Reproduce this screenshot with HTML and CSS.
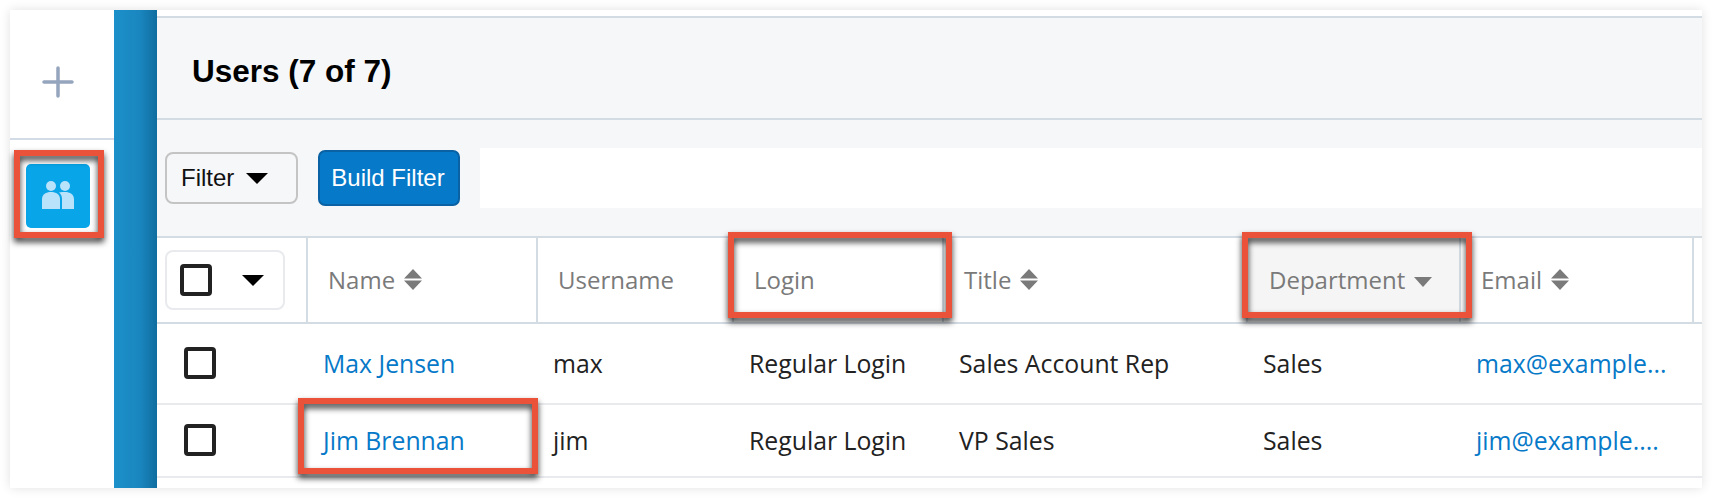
FILE: index.html
```html
<!DOCTYPE html>
<html lang="en">
<head>
<meta charset="utf-8">
<title>Users</title>
<link rel="stylesheet" href="styles.css">
</head>
<body>
<div class="window">
  <aside class="rail">
    <div class="rail-top">
      <svg class="plus" viewBox="0 0 32 32" width="32" height="32"><path d="M16 2v28M2 16h28" stroke="#95a5bd" stroke-width="3.500" stroke-linecap="round" fill="none"/></svg>
    </div>
    <div class="rail-item">
      <div class="tile">
        <svg viewBox="0 0 64 64" width="64" height="64"><circle cx="25" cy="22" r="5" fill="#b9e2fb"/><circle cx="39" cy="22" r="5" fill="#b9e2fb"/><path d="M16 45V35c0-4.500 4-7 9-7s9 2.500 9 7v10z" fill="#b9e2fb"/><path d="M36 45V35c0-3-1-5-3-6.500 2-.5 4-.5 6-.5 5 0 9 2.500 9 7v10z" fill="#b9e2fb"/></svg>
      </div>
    </div>
  </aside>
  <div class="strip"></div>
  <main class="main">
    <header class="title-bar"><h1>Users (7 of 7)</h1></header>
    <div class="filter-bar">
      <button class="btn-filter">Filter<span class="caret"></span></button>
      <button class="btn-build">Build Filter</button>
      <div class="search"></div>
    </div>
    <div class="table">
      <div class="row head">
        <div class="cell sel"><div class="pill"><span class="check"></span><span class="caret small"></span></div></div>
        <div class="cell th">Name<svg class="sort" viewBox="0 0 18 21" width="18" height="21"><path d="M9 0l9 9.500H0zM9 21L0 11.500h18z" fill="#7a7a7a"/></svg></div>
        <div class="cell th">Username</div>
        <div class="cell th">Login</div>
        <div class="cell th">Title<svg class="sort" viewBox="0 0 18 21" width="18" height="21"><path d="M9 0l9 9.500H0zM9 21L0 11.500h18z" fill="#7a7a7a"/></svg></div>
        <div class="cell th active">Department<svg class="sort down" viewBox="0 0 18 10" width="18" height="10"><path d="M9 10L0 0h18z" fill="#7a7a7a"/></svg></div>
        <div class="cell th">Email<svg class="sort" viewBox="0 0 18 21" width="18" height="21"><path d="M9 0l9 9.500H0zM9 21L0 11.500h18z" fill="#7a7a7a"/></svg></div>
        <div class="cell th end"></div>
      </div>
      <div class="row body first">
        <div class="cell sel"><span class="check row-check"></span></div>
        <div class="cell"><a>Max Jensen</a></div>
        <div class="cell">max</div>
        <div class="cell">Regular Login</div>
        <div class="cell">Sales Account Rep</div>
        <div class="cell">Sales</div>
        <div class="cell"><a>max@example...</a></div>
        <div class="cell"></div>
      </div>
      <div class="row body second">
        <div class="cell sel"><span class="check row-check"></span></div>
        <div class="cell"><a>Jim Brennan</a></div>
        <div class="cell">jim</div>
        <div class="cell">Regular Login</div>
        <div class="cell">VP Sales</div>
        <div class="cell">Sales</div>
        <div class="cell"><a>jim@example....</a></div>
        <div class="cell"></div>
      </div>
    </div>
  </main>
  <div class="mark mark-rail"></div>
  <div class="mark mark-jim"></div>
  <div class="mark mark-login"></div>
  <div class="mark mark-dept"></div>
</div>
</body>
</html>
```
FILE: styles.css
```css
* { box-sizing: border-box; }
html, body { margin: 0; padding: 0; background: #fff; }
body { padding: 10px; height: 498px; overflow: hidden; }
.window {
  position: relative;
  display: flex;
  width: 1692px;
  height: 478px;
  background: #fff;
  box-shadow: 0 0 10px rgba(0, 0, 0, .12);
  overflow: visible;
}
.rail { width: 104px; flex: none; background: #fff; }
.rail-top {
  height: 130px;
  border-bottom: 2px solid #d3dbe6;
  display: flex;
  align-items: center;
  justify-content: center;
  padding: 16px 8px 0 0;
}
.rail-item { padding: 24px 14px 0 16px; }
.tile {
  width: 64px;
  height: 64px;
  border-radius: 5px;
  background: #08a5e8;
}
.tile svg { display: block; }
.strip {
  width: 43px;
  flex: none;
  background: linear-gradient(90deg, #1c90ca 0%, #1a86bf 60%, #0f6d9f 100%);
}
.main {
  flex: 1;
  min-width: 0;
  padding-top: 6px;
  background: #fff;
  display: flex;
  flex-direction: column;
}
.title-bar {
  height: 104px;
  flex: none;
  background: #f6f7f9;
  border-top: 2px solid #d3dbe3;
  border-bottom: 2px solid #d3dbe3;
  display: flex;
  align-items: center;
  padding: 6px 0 0 35px;
}
h1 {
  margin: 0;
  font: 700 31.500px "Liberation Sans", Arial, sans-serif;
  color: #000;
}
.filter-bar {
  height: 118px;
  flex: none;
  background: #f6f7f9;
  border-bottom: 2px solid #d3dbe3;
  display: flex;
  align-items: center;
  padding: 0 0 0 8px;
}
.btn-filter {
  width: 133px;
  height: 52px;
  border: 2px solid #c4c4c4;
  border-radius: 8px;
  background: #f6f7f9;
  color: #111;
  font: 24px "Liberation Sans", Arial, sans-serif;
  display: flex;
  align-items: center;
  padding: 0 0 0 14px;
}
.caret {
  width: 0;
  height: 0;
  margin-left: 12px;
  border-left: 11px solid transparent;
  border-right: 11px solid transparent;
  border-top: 11px solid #000;
}
.btn-build {
  width: 142px;
  height: 56px;
  margin-left: 20px;
  border: 2px solid #0a62a4;
  border-radius: 7px;
  background: #0679c8;
  color: #fff;
  font: 24px "Liberation Sans", Arial, sans-serif;
  padding: 0 2px 0 0;
}
.search { flex: 1; height: 60px; margin-left: 20px; background: #fff; }
.table { flex: 1; background: #fff; color: #222; font: 24.800px "Open Sans", sans-serif; }
.row {
  display: grid;
  grid-template-columns: 151px 230px 196px 210px 304px 213px 233px 8px;
}
.head { height: 86px; border-bottom: 2px solid #d3dbe3; font-size: 24px; }
.head .cell { border-right: 2px solid #d3dbe3; }
.head .end { border-right: 0; }
.cell {
  display: flex;
  align-items: center;
  padding-left: 15px;
  white-space: nowrap;
  min-width: 0;
}
.th { padding: 0 0 2px 20px; color: #7a7a7a; }
.th.active { background: #f5f5f5; padding-left: 21px; }
.sel { padding-left: 8px; }
.sort { margin-left: 9px; flex: none; }
.sort.down { margin-top: 6px; margin-left: 9px; }
.pill {
  width: 120px;
  height: 60px;
  border: 2px solid #e8eaed;
  border-radius: 8px;
  display: flex;
  align-items: center;
  padding-left: 13px;
}
.check {
  width: 32px;
  height: 32px;
  flex: none;
  border: 4px solid #222;
  border-radius: 4px;
  background: #fff;
}
.caret.small { margin-left: 30px; }
.row-check { margin-left: 19px; }
.body { border-bottom: 2px solid #e8eaed; }
.body .sel { padding-left: 8px; }
.first { height: 81px; padding-bottom: 1px; }
.second { height: 73px; padding-bottom: 1px; }
a { color: #0679c8; text-decoration: none; }
.mark {
  position: absolute;
  border: 6px solid #ea533a;
  filter: drop-shadow(0 4px 3px rgba(0, 0, 0, .8));
}
.mark-rail { left: 4px; top: 140px; width: 90px; height: 88px; }
.mark-jim { left: 288px; top: 388px; width: 240px; height: 76px; }
.mark-login { left: 718px; top: 222px; width: 224px; height: 86px; }
.mark-dept { left: 1232px; top: 222px; width: 230px; height: 86px; }
```
